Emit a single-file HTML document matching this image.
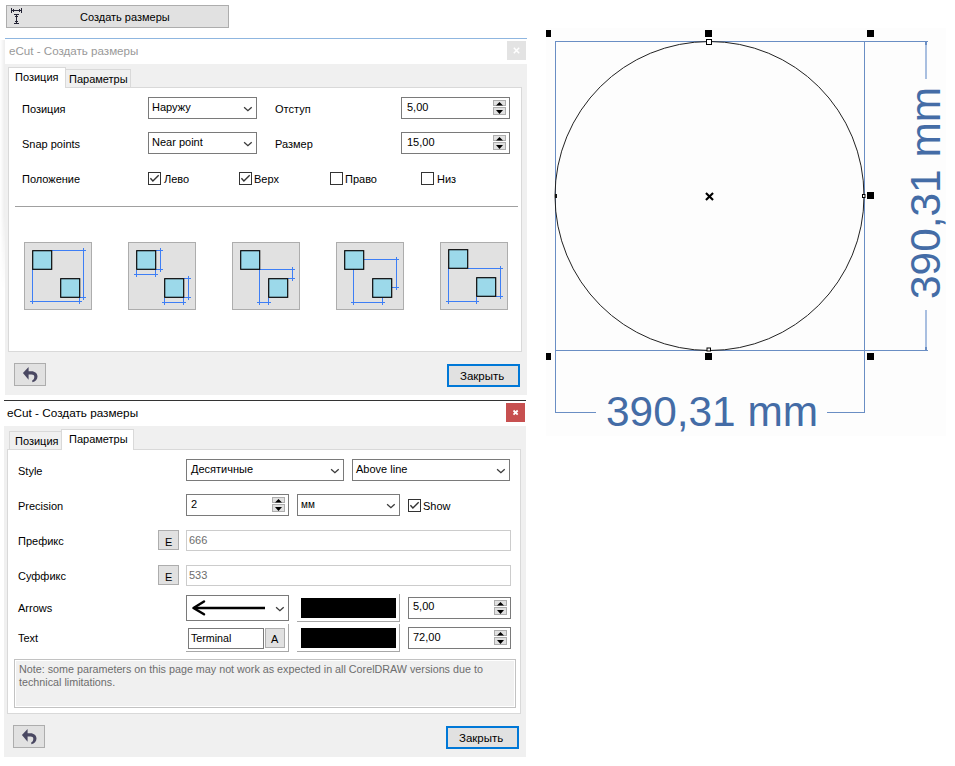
<!DOCTYPE html>
<html><head><meta charset="utf-8">
<style>
*{margin:0;padding:0;box-sizing:border-box}
html,body{width:955px;height:766px;overflow:hidden;background:#fff}
body{position:relative;font-family:"Liberation Sans",sans-serif;font-size:11px;color:#000}
.a{position:absolute}
.t{position:absolute;white-space:nowrap;line-height:13px;font-size:11px}
.btn{position:absolute;background:#e1e1e1;border:1px solid #adadad}
.grey{position:absolute;background:#f0f0f0}
.panel{position:absolute;background:#fff;border:1px solid #d9d9d9}
.inp{position:absolute;background:#fff;border:1px solid #7a7a7a}
.dis{position:absolute;background:#fff;border:1px solid #cccccc}
.cb{position:absolute;width:13px;height:13px;border:1px solid #333;background:#fff}
.spin{position:absolute;width:13px;background:#e1e1e1;border:1px solid #adadad}
svg{position:absolute;overflow:visible}
</style></head><body>

<!-- top button -->
<div class="btn" style="left:6px;top:5px;width:223px;height:23px"></div>
<svg style="left:0;top:0" width="30" height="30">
  <g stroke="#222233" stroke-width="1" fill="none" shape-rendering="crispEdges">
    <path d="M11.5,8 V13 M21.5,8 V13 M11.5,10.5 H21.5 M13.5,9 V12 M19.5,9 V12 M14,14.5 H19 M16.5,14.5 V23.5 M14,23.5 H19 M15,16.5 H18 M15,21.5 H18"/>
  </g>
</svg>
<div class="t" style="left:80px;top:11px">Создать размеры</div>

<!-- DIALOG 1 -->
<div class="a" style="left:0;top:40px;width:5px;height:250px;background:linear-gradient(to right,rgba(0,0,0,0.0),rgba(0,0,0,0.07));-webkit-mask-image:linear-gradient(to bottom,#000 70%,transparent)"></div>
<div class="a" style="left:5px;top:38px;width:522px;height:1px;background:#8fb6e0"></div>
<div class="t" style="left:9px;top:44px;color:#999;font-size:11.6px;line-height:14px">eCut - Создать размеры</div>
<div class="a" style="left:507px;top:41px;width:19px;height:19px;background:#e3e3e3"></div>
<svg style="left:0;top:0" width="1" height="1"><path d="M513.8,47.8 L519.2,53.2 M519.2,47.8 L513.8,53.2" stroke="#fff" stroke-width="1.5"/></svg>
<div class="grey" style="left:5px;top:64px;width:522px;height:331px"></div>
<div class="panel" style="left:8px;top:87px;width:514px;height:265px"></div>
<div class="a" style="left:65px;top:69px;width:66px;height:19px;background:#f0f0f0;border:1px solid #d9d9d9"></div>
<div class="a" style="left:8px;top:67px;width:58px;height:21px;background:#fff;border:1px solid #d9d9d9;border-bottom:none"></div>
<div class="t" style="left:15px;top:71px">Позиция</div>
<div class="t" style="left:69px;top:73px">Параметры</div>

<!-- row1 -->
<div class="t" style="left:22px;top:103px">Позиция</div>
<div class="inp" style="left:148px;top:97px;width:109px;height:22px"></div>
<div class="t" style="left:152px;top:101px">Наружу</div>
<svg style="left:243px;top:106px" width="10" height="6"><path d="M1.1,1.2 L4.9,4.7 L8.7,1.2" stroke="#3a3a3a" stroke-width="1.3" fill="none"/></svg>
<div class="t" style="left:275px;top:103px">Отступ</div>
<div class="inp" style="left:401px;top:97px;width:109px;height:22px"></div>
<div class="t" style="left:407px;top:101px">5,00</div>
<div class="spin" style="left:493px;top:100px;height:6px"></div>
<div class="spin" style="left:493px;top:107px;height:8px"></div>
<svg style="left:493px;top:100px" width="13" height="15"><path d="M3,5.6 L6.5,2 L10,5.6 Z M3,10 L10,10 L6.5,14 Z" fill="#000"/></svg>
<!-- row2 -->
<div class="t" style="left:22px;top:138px">Snap points</div>
<div class="inp" style="left:148px;top:132px;width:109px;height:22px"></div>
<div class="t" style="left:152px;top:136px">Near point</div>
<svg style="left:243px;top:141px" width="10" height="6"><path d="M1.1,1.2 L4.9,4.7 L8.7,1.2" stroke="#3a3a3a" stroke-width="1.3" fill="none"/></svg>
<div class="t" style="left:275px;top:138px">Размер</div>
<div class="inp" style="left:401px;top:132px;width:109px;height:22px"></div>
<div class="t" style="left:407px;top:136px">15,00</div>
<div class="spin" style="left:493px;top:135px;height:6px"></div>
<div class="spin" style="left:493px;top:142px;height:8px"></div>
<svg style="left:493px;top:135px" width="13" height="15"><path d="M3,5.6 L6.5,2 L10,5.6 Z M3,10 L10,10 L6.5,14 Z" fill="#000"/></svg>
<!-- row3 -->
<div class="t" style="left:22px;top:173px">Положение</div>
<div class="cb" style="left:148px;top:172px"></div>
<svg style="left:148px;top:172px" width="13" height="13"><path d="M2.4,6.3 L4.9,9 L10.7,3.3" stroke="#333" stroke-width="1.4" fill="none"/></svg>
<div class="t" style="left:164px;top:173px">Лево</div>
<div class="cb" style="left:239px;top:172px"></div>
<svg style="left:239px;top:172px" width="13" height="13"><path d="M2.4,6.3 L4.9,9 L10.7,3.3" stroke="#333" stroke-width="1.4" fill="none"/></svg>
<div class="t" style="left:254px;top:173px">Верх</div>
<div class="cb" style="left:330px;top:172px"></div>
<div class="t" style="left:345px;top:173px">Право</div>
<div class="cb" style="left:421px;top:172px"></div>
<div class="t" style="left:437px;top:173px">Низ</div>
<!-- separator -->
<div class="a" style="left:15px;top:206px;width:503px;height:1px;background:#a0a0a0"></div>
<!-- image buttons -->
<div class="btn" style="left:24px;top:242px;width:68px;height:68px"></div>
<svg style="left:24px;top:242px" width="68" height="68">
 <g stroke="#3d7ef5" stroke-width="1" fill="none">
  <path d="M28,8.5 H62 M59.5,6 V58 M56,55.5 H62 M8.5,27 V62 M6,59.5 H58 M55.5,56 V62"/>
 </g>
 <g fill="#9cd9ea" stroke="#000" stroke-width="1.15">
  <rect x="8.7" y="8.7" width="19" height="18.6"/><rect x="36.7" y="36.7" width="19" height="18.6"/>
 </g>
</svg>
<div class="btn" style="left:128px;top:242px;width:68px;height:68px"></div>
<svg style="left:128px;top:242px" width="68" height="68">
 <g stroke="#3d7ef5" stroke-width="1" fill="none">
  <path d="M28,8.5 H35 M28,27.5 H35 M32.5,6 V30 M8.5,28 V35 M27.5,28 V35 M6,32.5 H30
           M56,36.5 H63 M56,55.5 H63 M60.5,34 V58 M36.5,56 V63 M55.5,56 V63 M34,60.5 H58"/>
 </g>
 <g fill="#9cd9ea" stroke="#000" stroke-width="1.15">
  <rect x="8.7" y="8.7" width="19" height="18.6"/><rect x="36.7" y="36.7" width="19" height="18.6"/>
 </g>
</svg>
<div class="btn" style="left:232px;top:242px;width:68px;height:68px"></div>
<svg style="left:232px;top:242px" width="68" height="68">
 <g stroke="#3d7ef5" stroke-width="1" fill="none">
  <path d="M28,27.5 H63 M56,36.5 H63 M60.5,25 V39 M27.5,27 V63 M36.5,56 V63 M25,60.5 H39"/>
 </g>
 <g fill="#9cd9ea" stroke="#000" stroke-width="1.15">
  <rect x="8.7" y="8.7" width="19" height="18.6"/><rect x="36.7" y="36.7" width="19" height="18.6"/>
 </g>
</svg>
<div class="btn" style="left:336px;top:242px;width:68px;height:68px"></div>
<svg style="left:336px;top:242px" width="68" height="68">
 <g stroke="#3d7ef5" stroke-width="1" fill="none">
  <path d="M28,17.5 H63 M56,45.5 H63 M60.5,15 V48 M17.5,27 V63 M46.5,56 V63 M15,60.5 H49"/>
 </g>
 <g fill="#9cd9ea" stroke="#000" stroke-width="1.15">
  <rect x="8.7" y="8.7" width="19" height="18.6"/><rect x="36.7" y="36.7" width="19" height="18.6"/>
 </g>
</svg>
<div class="btn" style="left:440px;top:242px;width:68px;height:68px"></div>
<svg style="left:440px;top:242px" width="68" height="68">
 <g stroke="#3d7ef5" stroke-width="1" fill="none">
  <path d="M28,26.5 H63 M56,54.5 H63 M60.5,24 V57 M8.5,26 V62 M36.5,55 V62 M6,59.5 H39"/>
 </g>
 <g fill="#9cd9ea" stroke="#000" stroke-width="1.15">
  <rect x="8.7" y="7.7" width="19" height="18.6"/><rect x="36.7" y="35.7" width="19" height="18.6"/>
 </g>
</svg>
<!-- bottom buttons -->
<div class="btn" style="left:14px;top:363px;width:32px;height:23px"></div>
<svg style="left:14px;top:363px" width="32" height="23"><path d="M8.9,9.9 L14.6,4 L14.6,8.2 L17.5,8.2 C21,8.2 23.5,10.5 23.5,13.5 C23.5,16.5 21.5,18.8 18.3,19.3 L18.3,17.3 C19.8,16.8 20.3,15.3 20.3,13.8 C20.3,12.5 19.3,11.6 17.5,11.6 L14.6,11.6 L14.6,16.8 Z" fill="#4a4862"/></svg>
<div class="a" style="left:447px;top:364px;width:73px;height:23px;background:#e1e1e1;border:2px solid #0078d7"></div>
<div class="t" style="left:460px;top:370px;font-size:11.5px">Закрыть</div>


<!-- DIALOG 2 -->
<div class="a" style="left:4px;top:400px;width:522px;height:1px;background:#333"></div>
<div class="t" style="left:7px;top:406px;font-size:11.75px;line-height:14px">eCut - Создать размеры</div>
<div class="a" style="left:506px;top:403px;width:19px;height:19px;background:#c75050"></div>
<svg style="left:0;top:0" width="1" height="1"><path d="M513.5,410.5 L517.7,414.7 M517.7,410.5 L513.5,414.7" stroke="#fff" stroke-width="1.8"/></svg>
<div class="grey" style="left:4px;top:426px;width:522px;height:331px"></div>
<div class="panel" style="left:7px;top:449px;width:514px;height:265px"></div>
<div class="a" style="left:9px;top:431px;width:54px;height:19px;background:#f0f0f0;border:1px solid #d9d9d9"></div>
<div class="a" style="left:61px;top:429px;width:73px;height:21px;background:#fff;border:1px solid #d9d9d9;border-bottom:none"></div>
<div class="t" style="left:15px;top:435px">Позиция</div>
<div class="t" style="left:69px;top:433px">Параметры</div>

<!-- style row -->
<div class="t" style="left:18px;top:465px">Style</div>
<div class="inp" style="left:186px;top:459px;width:158px;height:22px"></div>
<div class="t" style="left:191px;top:463px">Десятичные</div>
<svg style="left:330px;top:468px" width="10" height="6"><path d="M1.1,1.2 L4.9,4.7 L8.7,1.2" stroke="#3a3a3a" stroke-width="1.3" fill="none"/></svg>
<div class="inp" style="left:352px;top:459px;width:158px;height:22px"></div>
<div class="t" style="left:356px;top:463px">Above line</div>
<svg style="left:496px;top:468px" width="10" height="6"><path d="M1.1,1.2 L4.9,4.7 L8.7,1.2" stroke="#3a3a3a" stroke-width="1.3" fill="none"/></svg>
<!-- precision row -->
<div class="t" style="left:18px;top:500px">Precision</div>
<div class="inp" style="left:186px;top:494px;width:103px;height:22px"></div>
<div class="t" style="left:191px;top:498px">2</div>
<div class="spin" style="left:272px;top:497px;height:6px"></div>
<div class="spin" style="left:272px;top:504px;height:8px"></div>
<svg style="left:272px;top:497px" width="13" height="15"><path d="M3,5.6 L6.5,2 L10,5.6 Z M3,10 L10,10 L6.5,14 Z" fill="#000"/></svg>
<div class="inp" style="left:297px;top:494px;width:103px;height:22px"></div>
<div class="t" style="left:301px;top:498px;font-size:10px">мм</div>
<svg style="left:386px;top:503px" width="10" height="6"><path d="M1.1,1.2 L4.9,4.7 L8.7,1.2" stroke="#3a3a3a" stroke-width="1.3" fill="none"/></svg>
<div class="cb" style="left:408px;top:499px"></div>
<svg style="left:408px;top:499px" width="13" height="13"><path d="M2.4,6.3 L4.9,9 L10.7,3.3" stroke="#333" stroke-width="1.4" fill="none"/></svg>
<div class="t" style="left:423px;top:500px">Show</div>
<!-- prefix -->
<div class="t" style="left:18px;top:535px">Префикс</div>
<div class="btn" style="left:158px;top:530px;width:21px;height:20px"></div>
<div class="t" style="left:165px;top:536px">E</div>
<div class="dis" style="left:186px;top:530px;width:325px;height:21px"></div>
<div class="t" style="left:189px;top:534px;color:#6d6d6d">666</div>
<!-- suffix -->
<div class="t" style="left:18px;top:570px">Суффикс</div>
<div class="btn" style="left:158px;top:565px;width:21px;height:20px"></div>
<div class="t" style="left:165px;top:571px">E</div>
<div class="dis" style="left:186px;top:565px;width:325px;height:21px"></div>
<div class="t" style="left:189px;top:569px;color:#6d6d6d">533</div>
<!-- arrows -->
<div class="t" style="left:18px;top:602px">Arrows</div>
<div class="inp" style="left:186px;top:595px;width:103px;height:26px"></div>
<svg style="left:186px;top:595px" width="103" height="26">
 <path d="M18,6.5 L7.5,13 L18,19.3" stroke="#000" stroke-width="2.5" fill="none" stroke-linejoin="round" stroke-linecap="round"/><path d="M8.5,13 H79" stroke="#000" stroke-width="2.6" fill="none"/>
</svg>
<svg style="left:275px;top:606px" width="10" height="6"><path d="M1.1,1.2 L4.9,4.7 L8.7,1.2" stroke="#3a3a3a" stroke-width="1.3" fill="none"/></svg>
<div class="a" style="left:297px;top:594px;width:103px;height:28px;border-right:1px solid #a8a8a8;border-bottom:1px solid #a8a8a8"></div>
<div class="a" style="left:301px;top:598px;width:95px;height:20px;background:#000"></div>
<div class="inp" style="left:408px;top:597px;width:103px;height:22px"></div>
<div class="t" style="left:413px;top:600px">5,00</div>
<div class="spin" style="left:494px;top:600px;height:6px"></div>
<div class="spin" style="left:494px;top:607px;height:8px"></div>
<svg style="left:494px;top:600px" width="13" height="15"><path d="M3,5.6 L6.5,2 L10,5.6 Z M3,10 L10,10 L6.5,14 Z" fill="#000"/></svg>
<!-- text -->
<div class="t" style="left:18px;top:632px">Text</div>
<div class="a" style="left:186px;top:624px;width:103px;height:28px;border-right:1px solid #a8a8a8;border-bottom:1px solid #a8a8a8"></div>
<div class="inp" style="left:188px;top:628px;width:76px;height:21px"></div>
<div class="t" style="left:191px;top:632px;font-size:10.7px">Terminal</div>
<div class="btn" style="left:265px;top:628px;width:20px;height:20px"></div>
<div class="t" style="left:271px;top:633px">A</div>
<div class="a" style="left:297px;top:624px;width:103px;height:28px;border-right:1px solid #a8a8a8;border-bottom:1px solid #a8a8a8"></div>
<div class="a" style="left:301px;top:628px;width:95px;height:20px;background:#000"></div>
<div class="inp" style="left:408px;top:627px;width:103px;height:22px"></div>
<div class="t" style="left:413px;top:631px">72,00</div>
<div class="spin" style="left:494px;top:630px;height:6px"></div>
<div class="spin" style="left:494px;top:637px;height:8px"></div>
<svg style="left:494px;top:630px" width="13" height="15"><path d="M3,5.6 L6.5,2 L10,5.6 Z M3,10 L10,10 L6.5,14 Z" fill="#000"/></svg>
<!-- note -->
<div class="a" style="left:14px;top:659px;width:502px;height:49px;background:#f0f0f0;border:1px solid #c2c2c2;box-shadow:inset 0 0 0 1px #fff"></div>
<div class="t" style="left:19px;top:663px;color:#6d6d6d;font-size:10.75px">Note: some parameters on this page may not work as expected in all CorelDRAW versions due to</div>
<div class="t" style="left:19px;top:676px;color:#6d6d6d;font-size:10.75px">technical limitations.</div>
<!-- bottom -->
<div class="btn" style="left:13px;top:725px;width:32px;height:23px"></div>
<svg style="left:13px;top:725px" width="32" height="23"><path d="M8.9,9.9 L14.6,4 L14.6,8.2 L17.5,8.2 C21,8.2 23.5,10.5 23.5,13.5 C23.5,16.5 21.5,18.8 18.3,19.3 L18.3,17.3 C19.8,16.8 20.3,15.3 20.3,13.8 C20.3,12.5 19.3,11.6 17.5,11.6 L14.6,11.6 L14.6,16.8 Z" fill="#4a4862"/></svg>
<div class="a" style="left:446px;top:726px;width:73px;height:23px;background:#e1e1e1;border:2px solid #0078d7"></div>
<div class="t" style="left:459px;top:732px;font-size:11.5px">Закрыть</div>


<!-- DRAWING -->
<div class="a" style="left:546px;top:28px;width:400px;height:408px;background:#fdfdfd"></div>
<svg style="left:0;top:0" width="955" height="766">
 <g stroke="#6a8ec4" stroke-width="1" fill="none" shape-rendering="crispEdges">
  <rect x="555.5" y="41.5" width="309" height="309"/>
  <path d="M864,41.5 H928 M864,350.5 H928 M555.5,350 V413 M864.5,350 V413 M555,412.5 H596 M827,412.5 H865"/>
 </g>
 <rect x="925" y="42" width="2" height="37" fill="#a9bfe0"/><rect x="925" y="310" width="2" height="40" fill="#a9bfe0"/><rect x="925" y="42" width="2" height="3" fill="#6a8ec4"/><rect x="925" y="347" width="2" height="3" fill="#6a8ec4"/>
 <circle cx="709.5" cy="196" r="154.5" stroke="#222" stroke-width="1" fill="none"/><rect x="555" y="194" width="2" height="4" fill="#111"/>
 <g fill="#000">
  <rect x="546" y="30" width="5" height="7"/>
  <rect x="705" y="30" width="7" height="7"/>
  <rect x="867" y="30" width="7" height="7"/>
  <rect x="867" y="192" width="7" height="7"/>
  <rect x="546" y="353" width="5" height="7"/>
  <rect x="705" y="353" width="7" height="7"/>
  <rect x="867" y="353" width="7" height="7"/>
 </g>
 <g fill="#fff" stroke="#000" stroke-width="1">
  <rect x="706.5" y="39.5" width="5" height="5"/>
  <rect x="707" y="348" width="3.5" height="3"/>
  <rect x="862.5" y="194.5" width="2.5" height="3"/>
 </g>
  <path d="M706.7,193.7 L712.3,199.3 M712.3,193.7 L706.7,199.3" stroke="#000" stroke-width="2.1" stroke-linecap="square"/>
 <g fill="#446ca6" font-family="Liberation Sans" font-size="42.4">
  <text x="606" y="426">390,31 mm</text>
  <text x="940" y="299" transform="rotate(-90 940 299)">390,31 mm</text>
 </g>
</svg>


</body></html>
